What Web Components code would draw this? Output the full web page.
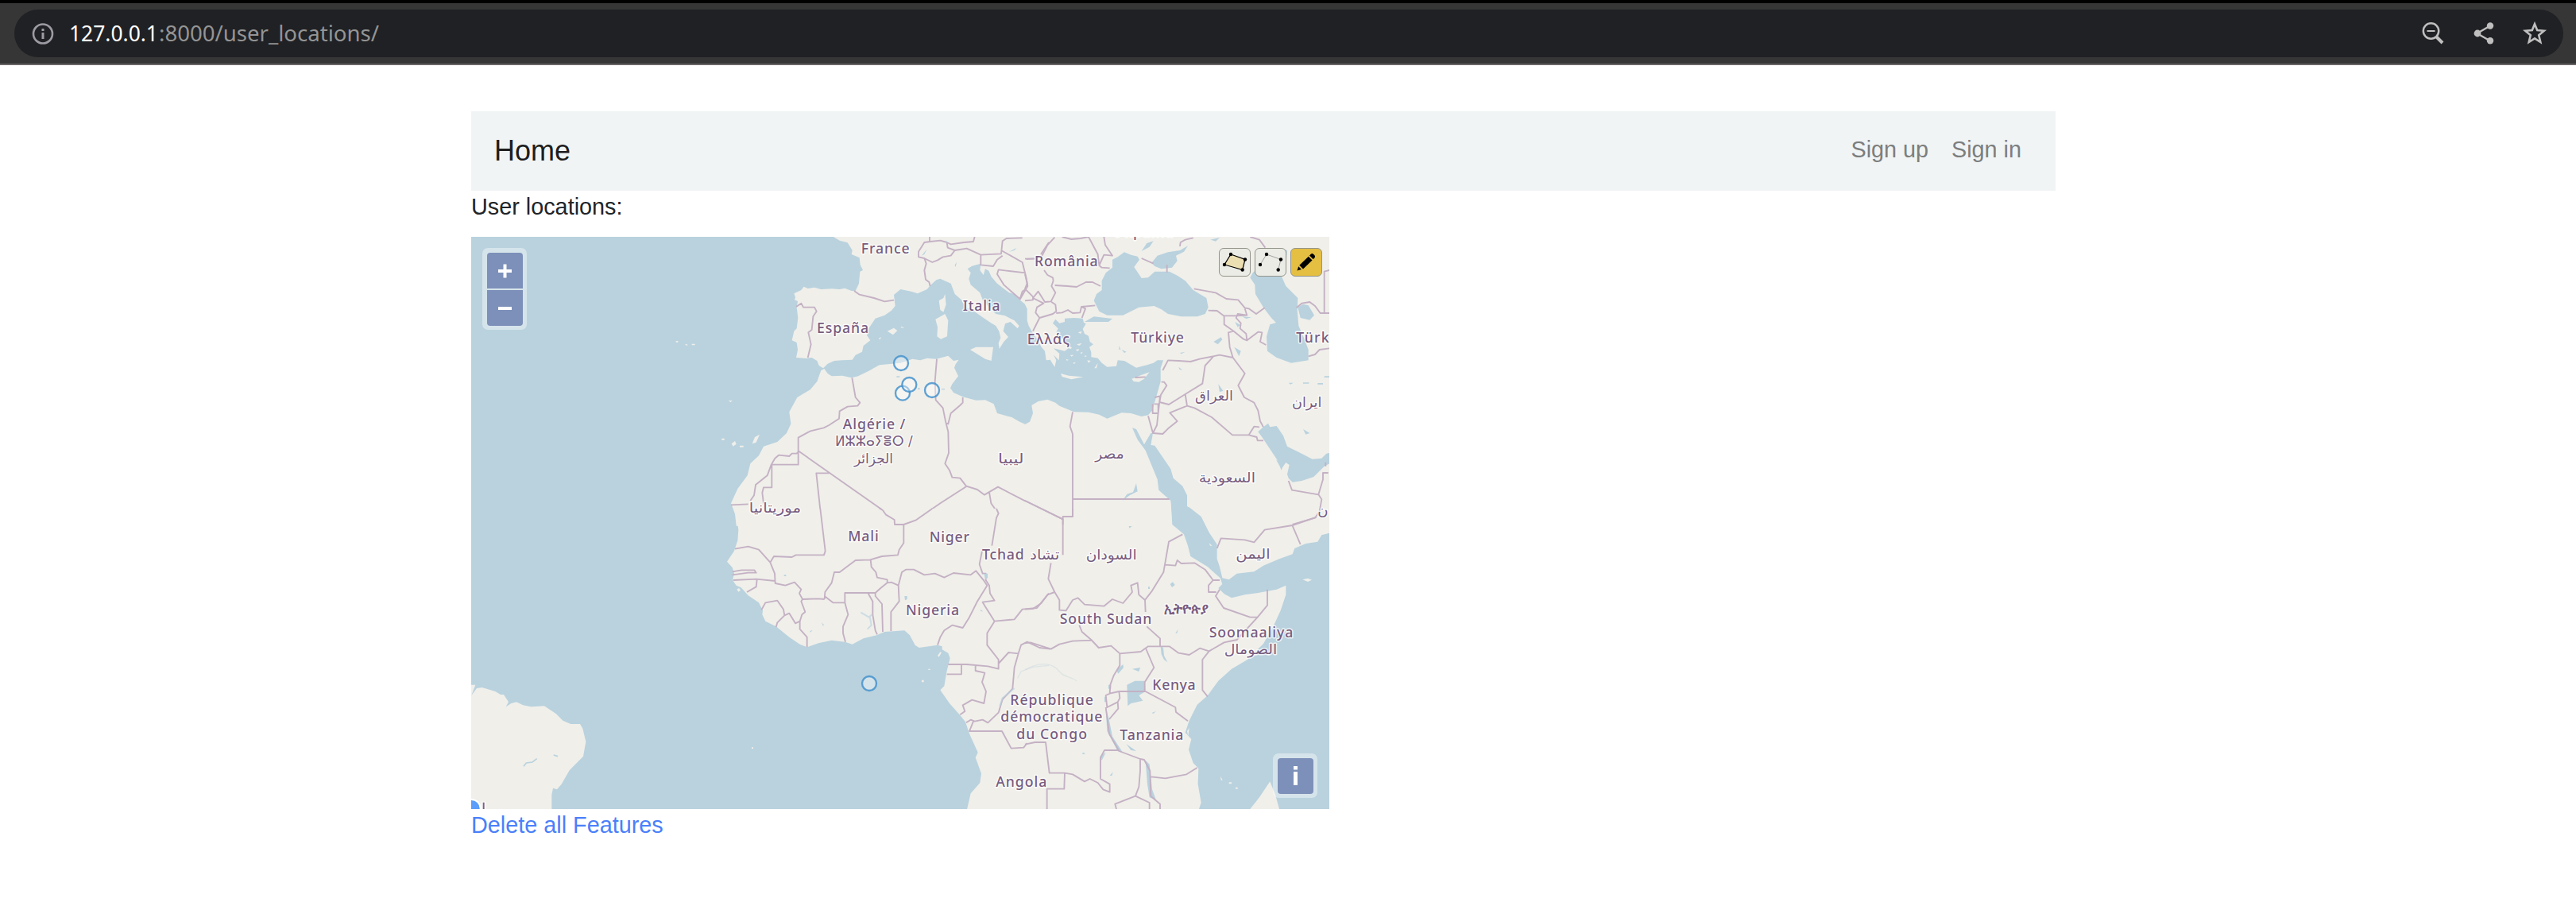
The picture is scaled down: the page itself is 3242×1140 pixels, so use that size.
<!DOCTYPE html>
<html lang="en">
<head>
<meta charset="utf-8">
<title>User locations</title>
<style>
body{margin:0;background:#fff;font-family:"Liberation Sans",Arial,sans-serif;color:#212529;font-size:28.8px;line-height:43.2px}
</style>
</head>
<body>
<locations-app></locations-app>
<script>
const define = (name, html) => {
  const t = document.createElement('template');
  t.innerHTML = html;
  customElements.define(name, class extends HTMLElement {
    constructor() {
      super();
      this.attachShadow({ mode: 'open' }).append(t.content.cloneNode(true));
    }
  });
};

define('address-bar', `
<style>
:host{display:block;box-sizing:border-box;height:82px;background:#363636;border-top:4px solid #000;border-bottom:2px solid #696566;padding:8px 16px 8px 18px}
.pill{height:60px;border-radius:30px;background:#202124;display:flex;align-items:center;justify-content:space-between;padding:0 20px 0 19px}
.left{display:flex;align-items:center;height:60px}
.actions{display:flex;gap:32px;margin-right:0}
svg{display:block}
text{font-family:"Noto Sans",sans-serif;font-size:27px}
</style>
<div class="pill">
  <div class="left">
    <svg width="36" height="36" viewBox="0 0 36 36"><circle cx="17" cy="18.5" r="12" fill="none" stroke="#9d9ba3" stroke-width="2.6"/><path d="M15.5 12h3v3h-3zM15.5 17h3v8h-3z" fill="#9d9ba3"/></svg>
    <svg width="420" height="60" viewBox="0 0 420 60" style="margin-left:14px"><text x="0" y="40" fill="#fff" textLength="112" lengthAdjust="spacingAndGlyphs">127.0.0.1</text><text x="113" y="40" fill="#949494" textLength="277" lengthAdjust="spacingAndGlyphs">:8000/user_locations/</text></svg>
  </div>
  <div class="actions">
    <svg width="32" height="32" viewBox="0 0 32 32" fill="none" stroke="#bfbfbf"><circle cx="13.5" cy="13" r="9.7" stroke-width="2.5"/><path d="M8.5 13h10" stroke-width="2"/><path d="M20 20l8 8" stroke-width="4"/></svg>
    <svg width="32" height="32" viewBox="0 0 32 32" fill="#bfbfbf"><path d="M24 6.5L7.500 16L24 25.500" fill="none" stroke="#bfbfbf" stroke-width="2.4"/><circle cx="24" cy="6.500" r="4.200"/><circle cx="8" cy="16" r="4.400"/><circle cx="24" cy="25.300" r="4.200"/></svg>
    <svg width="32" height="32" viewBox="0 0 32 32"><path d="M16 4.200L19.200 12.100L27.800 12.700L21.200 18.300L23.300 27L16 22.400L8.700 27L10.800 18.300L4.200 12.700L12.800 12.100Z" fill="none" stroke="#bfbfbf" stroke-width="2.6"/></svg>
  </div>
</div>`);

define('nav-bar', `
<style>
:host{display:flex;box-sizing:border-box;height:100px;background:#f0f4f5;padding:0 43px 3px 29px;align-items:center;justify-content:space-between}
.brand{font-size:36px;color:rgba(0,0,0,.9);padding-top:2px}
nav{display:flex;gap:28.8px;color:#7c7e7e}
</style>
<div class="brand"><slot name="brand"></slot></div>
<nav><slot></slot></nav>`);

define('ol-panel', `
<style>
:host{display:flex;flex-direction:column;gap:2px;background:rgba(255,255,255,.4);border-radius:7px;padding:6px 5px 5px 6px}
::slotted(svg){display:block;width:45px;height:45px;background:#7c90b9}
::slotted(svg:first-child){border-radius:4px 4px 0 0}
::slotted(svg:last-child){border-radius:0 0 4px 4px}
::slotted(svg:only-child){border-radius:4px}
</style><slot></slot>`);

define('draw-tool', `
<style>
:host{display:block;box-sizing:border-box;width:40px;height:36px;border:1px solid #94948a;border-radius:6px;background:#ebece6;overflow:hidden}
:host([active]){background:#e5bf42}
::slotted(svg){display:block}
</style><slot></slot>`);

define('world-map', `
<style>
:host{display:block;width:1080px;height:720px}
svg{display:block}
.land{fill:#f0efea}
.sea{fill:#b9d2de}
.b{fill:none;stroke:#c4b1c4;stroke-width:5.6;stroke-linejoin:round}
.isl{fill:#f0efea}
text{font-family:"Noto Sans","DejaVu Sans",sans-serif;font-size:53px;font-weight:500;fill:#775c80;stroke:#fff;stroke-opacity:.75;stroke-width:9;stroke-linejoin:round;paint-order:stroke}
.ar{font-family:"DejaVu Sans",sans-serif;font-size:53px}
.pin circle{fill:rgba(255,255,255,.4);stroke:#4592cd;stroke-opacity:.85;stroke-width:7}
</style>
<svg width="1080" height="720" viewBox="-921 24 3240 2160">
<rect class="sea" x="-921" y="24" width="3240" height="2160"/>
<g transform="translate(1170 0)"><path class="land" d="M0 20H1150V1070H0z"/></g>
<g transform="translate(1170 1050)"><path class="land" d="M0 0H1150V1140H0z"/></g>

<!-- western Europe and the Maghreb -->
<g>
<path class="land" d="M440 20L470 38 500 46 518 75 515 90 545 103 548 130 558 150 547 155 543 200 530 228 515 228 490 218 470 222 440 220 400 222 375 215 350 219 335 212 325 225 298 238 303 252 300 262 312 267 308 290 313 330 308 370 298 380 290 415 308 423 312 450 306 480 345 483 365 480 385 492 392 510 408 520 425 503 450 492 480 490 518 488 530 470 555 458 560 435 586 415 573 395 580 370 605 332 640 320 665 303 680 285 675 243 700 222 740 230 765 238 800 222 812 208 835 187 850 182 890 200 905 240 930 262 945 290 975 303 1010 328 1040 348 1060 360 1072 380 1078 405 1070 425 1073 447 1090 420 1107 402 1088 380 1095 352 1115 345 1142 370 1148 360 1130 340 1095 322 1060 315 1035 290 1010 262 1000 235 965 205 958 182 965 160 953 145 970 134 1003 125 1000 150 1013 168 1020 145 1033 152 1043 175 1065 200 1090 220 1110 235 1130 240 1150 262 1172 280V20z"/>
<path class="land" d="M1172 732L1150 722 1120 705 1065 690 1052 655 1020 640 985 641 935 628 900 612 888 595 895 580 918 550 903 518 908 505 920 488 900 492 880 473 855 480 835 485 800 482 775 490 745 485 700 500 620 508 580 530 540 550 515 556 480 548 440 550 425 540 412 522 400 528 385 570 360 600 310 630 280 685 286 730 270 765 235 798 183 815 165 850 133 880 122 925 85 975 60 1030 75 1070 80 1115H1172z"/>
<path class="isl" d="M845 265L862 255 868 240 872 280 862 308 850 300zM832 335L868 315 880 340 876 400 852 410 838 400 840 365zM963 450L985 440 1050 440 1043 492 1020 485zM650 380L675 368 688 378 672 394zM700 366L716 370 704 362zM617 408L628 402 622 412zM140 805L150 780 168 770 155 800zM62 805L75 795 80 806 68 815zM93 812h14v6h-14zM25 785h10v6h-10zM50 642L66 642 58 648zM-148 417h8v5h-8zM-115 432l8-4 4 6zM-88 428h12v5h-12z"/>
<path class="b" d="M525 228L545 242 600 255 640 268 675 263M306 288L325 275 333 290 375 290 383 305 370 325 365 375 352 385 362 430 350 480M812 210L808 195 795 185 790 150 797 125 790 105 768 100 768 80 790 45 812 42 850 38 875 45 890 52 940 45 975 42 980 24M810 24V42M875 45L878 65 905 75 890 95 860 100 840 112 820 120 790 105M905 75L950 68 1003 92 1080 88 1085 40 1100 30 1160 28M1003 92V130L1050 135 1065 110 1085 95M1080 75L1160 120 1175 180 1180 210 1150 262M1172 160L1100 152 1070 148 1065 165 1090 205 1150 258M1175 108L1205 106M1230 90L1260 45M1175 220L1160 230 1150 262M517 556L530 630 547 650 538 662 500 665 470 682 468 710 430 735 410 745 360 757 314 782V884H212M314 835L308 842 290 842 280 852 240 848 226 860 212 884 197 925 153 960 147 1000 133 1020M214 884V970H183L178 990 183 1030M125 1033L60 1036M314 832L633 1056 645 1073 677 1092 678 1110H712L757 1094 850 1030 948 967M403 1110L382 916H430M837 485L830 570 833 640 860 670 870 720 880 760 882 840 868 880 885 905 895 932 925 935 948 965 990 978 1017 998 1068 968 1172 1022M870 725L880 730 890 690 925 660 935 650V630M1035 988L1042 1030 1070 1070 1060 1110"/>
<path class="sea" d="M1110 80L1138 66 1130 75zM905 130L912 120 908 138zM780 95L800 70 790 90zM685 550h12v4h-12zM765 595h8v5h-8zM855 597h12v4h-12zM870 38l6 4-6 5z"/>
</g>

<!-- Balkans, Black Sea, Levant, Arabia -->
<g transform="translate(1170 0)">
<path class="sea" d="M0 280L8 295 8 340 14 360 28 385 45 410 62 440 75 455 80 490 95 488 112 515 118 490 108 470 128 490 130 465 108 445 150 455 170 440 140 408 118 385 125 370 105 350 115 335 130 350 150 345 150 332 185 330 218 332 222 348 230 352 218 372 225 390 240 398 245 420 258 430 243 440 250 460 250 478 275 482 290 500 310 515 345 512 350 490 375 492 420 518 460 508 485 500 500 490 522 490 512 520 512 570 495 630 480 680 465 697 440 702 400 690 365 688 310 710 280 695 240 686 185 685 130 662 115 650 85 638 50 645 25 660 30 690 18 722 0 732z"/>
<path class="sea" d="M225 345L260 325 330 333 315 345 280 345zM260 265L270 240 290 225 290 190 305 160 330 140 330 110 350 100 375 82 400 92 425 98 432 110 412 138 440 180 465 178 490 155 545 155 575 170 605 190 635 225 685 255 692 290 680 315 650 325 590 325 540 315 515 298 488 285 430 290 400 305 370 320 310 320 280 305zM478 122L500 95 540 82 585 75 615 58 600 80 570 95 575 115 555 140 515 145 490 135z"/>
<path class="sea" d="M850 178L860 160 925 100 935 90 975 70 990 75 985 130 965 165 985 210 1030 255 1028 300 1033 360 1055 410 1070 450 1070 490 1005 500 950 480 915 455 912 400 925 355 948 348 930 330 900 290 870 240 868 205zM1030 290L1050 278 1070 283 1092 320 1075 338 1040 330z"/>
<path class="sea" d="M880 760L900 742 918 728 925 742 950 738 975 775 990 815 1040 840 1085 863 1120 860 1138 842 1150 840V880L1130 890 1090 930 1045 945 1010 950 995 935 990 920 998 885 985 876 972 895 968 905 962 890 948 865 955 870 915 810 895 780zM405 745L420 750 450 808 475 765 483 765 475 810 490 812 550 900 560 935 595 965 612 1000 612 1040 650 1080 670 1110 560 1112 550 1020 505 980 500 940 455 830 425 790zM368 1020L385 995 408 988 420 955 425 985 395 1000zM712 420L740 403 745 412 728 430zM790 440L815 455 808 475zM730 580L748 605 735 610zM793 345l20 12-10 8zM700 35l35-8-15 14zM440 78l20-30 25-8-15 22zM1050 750l25 15-15 5zM995 575l18 0-10 6zM1050 574h22v4h-22zM1130 550h20v5h-20zM1105 576h20v5h-20zM365 450l18 8-8 4zM355 435l6 14h-6zM580 515l15 12-12-3zM585 462l20-4-15 8zM820 325l35 3-20 5z"/>
<path class="isl" d="M135 540L165 548 220 553 175 562 140 552zM403 560L440 545 470 535 450 560 430 572 410 570zM262 520L275 500 270 520zM195 430L215 425 205 435zM190 450L205 448 200 456zM200 385L215 380 210 390zM235 490L248 492 240 500zM170 470l14 0-8 6zM160 395l12 4-8 5zM150 425l28 18-8 5zM180 500l12-3-6 7zM208 462l10-4-4 8zM155 485l10 3-7 4zM225 472l9 2-8 4z"/>
<path class="b" d="M0 107H35M62 100L85 55 112 26M140 24L175 33 210 30 240 24 275 90 280 130M298 24L303 55 330 95 298 92 280 132 290 140 320 142M72 150L85 168 105 178 107 190M113 207L160 210 195 213 230 195 255 195 285 210M107 190L100 210 115 235 98 268 75 270 50 230 30 255 70 275 45 290 40 310 55 330 105 315 118 305 115 280 100 270M0 165L8 200 0 220 30 250 30 262 0 265M55 330L30 380M118 312L140 310 162 300 180 312 208 310 213 288 265 283M213 288L228 295 215 330M585 60L587 45 605 35 635 28M440 105L485 125M536 130V158M850 24L885 35 907 65M638 220L720 235 760 258 805 262 830 292 845 295 873 315 905 292M692 302L725 303 750 322 800 322 838 320 830 295M752 322V355L788 380 825 410 838 415 835 390 812 370 815 350 797 330 803 315 838 320M788 380L768 385 773 440 785 480 830 540 805 585 828 630 865 650 880 680 888 720 900 742M838 415L880 383 895 385 888 420 910 432M520 528L540 490 580 492 625 495 660 485 710 475 735 470 785 480M712 475L680 510 670 578 605 618 543 657 508 648 513 620 535 585 525 572 515 572M605 618L612 662 547 688 575 720 540 748 520 768 483 765 465 700M490 630L510 625 498 735 483 765M488 655H503V690H482V655M612 662L640 670 705 705 783 772H845L865 740 885 742M845 772L875 780 878 793H900M995 945L1008 980 1108 997 1120 1015 1112 1060 1095 1085 1010 1110M1108 997L1125 940V915H1145M1025 292L1045 275 1075 270 1095 285 1115 312H1150M1130 312V155L1150 150M1070 475L1095 468 1112 450 1150 445M180 685L170 740 180 768V1080H143V1110M180 1014H545M0 1020L143 1090M415 555L455 553M1135 875V890"/>
</g>

<!-- west and central Africa -->
<g transform="translate(0 1050)">
<path class="land" d="M72 0L75 15 82 40 88 80 85 120 72 160 45 200 65 222 72 245 66 270 80 290 98 298 125 328 165 355 180 385 178 400 190 425 230 445 280 485 320 512 347 523 390 508 440 497 490 503 518 512 560 490 610 478 640 465 715 460 735 478 755 515 770 525 840 515 857 520 857 532 880 545 887 565 875 612 865 670 850 685 885 735 925 780 945 805 960 850 992 920 983 940 1005 1000 1000 1035 965 1075 950 1140H1172V0z"/>
<path class="isl" d="M840 555l10-14 5 2-10 17zM780 647h8v8h-8zM805 605h7v4h-7zM138 901h6v5h-6zM82 305l8-5 6 8-8 6z"/>
<path class="b" d="M620 -2L633 6 645 23 677 42 678 60H712L757 44 820 0M75 152L125 143 165 155 208 203 222 180 290 183 305 175H411L416 160 397 0M208 203L225 245 227 282 265 290 300 278 325 305 318 320 330 342 390 340 413 342M65 238L100 232H148L155 242H125L65 250M68 270L155 266 227 273M158 268L155 295 120 315M175 382L190 355 235 347 258 380 262 403 235 430 230 447M262 403L280 395 303 433 320 425 328 400 340 390 325 350 330 342M320 425V455L347 485V523M413 342L415 315 440 280 450 240 470 240 530 195 585 193 630 180 690 175 695 155 712 130V60M413 330L445 355 490 355M587 193L590 220 607 240 612 260 650 268 650 280 625 300 605 318H490V355L502 400 483 445V470L492 503M578 320L595 350V400L605 460 612 475M605 318V330L630 360 633 465M664 462V390L695 350 692 290 665 278 650 280M692 290L705 240 720 230 750 230 790 250 830 245 865 260 900 243 965 250 985 235 1015 272 1027 290 990 350 960 410 935 450 895 440 865 460 850 485 840 515M1062 0L1070 18 1062 35 1045 140M1010 150L998 210 1010 245H1022V270L1035 290 1038 320 1055 347 1010 353 1020 370 1055 425 1027 470V515L1070 570V605L1030 595 950 588H880M930 590V625H875M983 592V612L1018 620 1008 655 1023 690 1015 735 970 722 935 742 943 765 925 778M1070 585L1108 543 1145 547M1055 425L1130 418 1160 380 1215 375 1260 320M1145 547L1130 600 1123 680 1085 720 1070 770 1030 808 1010 797 980 803 965 797 948 808M975 803L960 840H1083L1118 905 1165 902 1178 885M1145 547L1155 515 1178 503 1225 525 1265 530"/>
<path fill="none" stroke="#b9d2de" stroke-width="6" d="M1130 678L1085 715 1075 745M550 392L585 412 590 440 575 455M580 410L592 400" stroke-opacity=".65"/>
<path fill="none" stroke="#b9d2de" stroke-width="4" d="M1142 640L1155 615 1200 598 1260 592" stroke-opacity=".35"/>
<path class="sea" d="M1015 245h14v16l-8 6zM715 330h10v12l-8 4zM402 430l10 10-5 2zM1000 380l12 8h-8zM358 462l10-3-8 8zM260 250h8v5h-8z"/>
</g>

<!-- east Africa and the Indian Ocean -->
<g transform="translate(1170 1050)">
<path class="sea" d="M552 -10L556 60 600 97 615 140 625 180 690 220 737 262 745 285 730 300 752 322 780 337 830 325 880 318 950 305 985 290 985 325 965 385 935 450 900 510 840 570 780 605 730 650 690 705 650 740 620 800 605 845 628 870 618 910 635 960 655 980 653 1040 665 1110 655 1140H845L885 1090 925 1030 945 1080 962 1140H1150V92L1120 100 1105 125 1060 132 1018 150 1010 172 960 190 900 215 865 238 800 245 770 268 745 262 735 220 725 190 725 135 695 90 665 30 620 -5z"/>
<path class="isl" d="M1048 268l20-5 15 6-15 7zM738 1010l8 15h-6zM770 1033h10v6h-10zM795 1052h8v6h-8zM612 840l8-12-4 30zM695 130l12 10h-8z"/>
<path class="sea" d="M385 665L415 650 450 650 455 690 430 705 445 725 400 735 388 745zM512 520L522 525 525 555 538 580 525 570 515 550zM345 610L370 588 372 600 352 623zM305 750L318 800 330 860 370 922 350 915 310 840zM382 888L420 915 400 912zM455 950L470 965 475 1010 480 1060 495 1100 470 1090 462 1040zM283 935L305 920 290 950zM548 285L558 277 566 288 555 297zM405 605L435 600 430 615zM315 665h10v15h-10zM300 710h8v20h-8zM392 66l12 0-10 8zM568 470l10-15-4 15zM480 770l15-5-12 10zM320 1008l12-14-4 14zM465 295h6v8h-6zM217 922h8v5h-8z"/>
<path class="b" d="M0 380L30 378 60 358 85 325 112 315 130 345V383L155 385 180 345 200 337 225 362 298 368 330 342 370 357 405 315 400 290 425 280 430 325 453 345 455 390M98 205L88 265 100 290 112 315M0 -30L143 40V175M143 30H180V0M453 345L480 310 523 240 530 200 543 125 595 97M530 212L568 215 575 195 590 207 640 205 680 230 710 270H735M710 270L693 290V315H722M735 305L720 330 750 375 850 410H878L915 365V305M878 410L800 495 752 505 695 538 660 527 620 552 580 545 545 520H465L437 540 358 547 325 518 278 525 250 495 215 465 205 440M250 497L180 500 130 512 98 530 20 505 0 508M510 520V490L460 445M695 538L670 570V685L690 710M455 525L487 600 452 655V690H355L320 698 322 665 335 630 358 592V547M355 690L358 715 350 730 310 750 305 705 320 698M350 730L352 755 318 795M455 690L568 750 570 768 615 802M305 750L318 850 355 915 435 945 450 948 472 990 475 1085 510 1115V1134M355 912H300L285 940V1020L320 1040V1070L295 1060 275 1035 245 1020 225 1030 180 1003 150 998 92 998 78 882H38L0 890M150 998L148 1058H83V1134M475 1012L530 1018 610 1003 650 978M435 945V990L430 1050 417 1085 340 1115 345 1134M417 1085L470 1110 470 1134M725 150L740 112 830 118 865 127 905 80 1010 63 1100 32M1010 65L1040 135"/>
<path fill="none" stroke="#b9d2de" stroke-width="4" stroke-opacity=".35" d="M0 608C70 570 110 590 130 615S170 630 195 650"/>
</g>

<!-- Brazil -->
<g transform="translate(-930 1530)">
<path class="land" d="M0 185L25 185 10 225 30 198 50 195 100 210 120 222 132 222 150 250 140 268 160 255 180 250 205 262 235 268 285 265 330 295 355 320 385 333 420 333 430 350 442 400 432 455 380 508 350 560 333 580 318 575 313 600V660H0z"/>
<path fill="none" stroke="#b9d2de" stroke-width="5" d="M207 493L217 480 240 477 257 464M320 450L336 455"/>
<circle cx="10" cy="652" r="37" fill="#fff"/><circle cx="10" cy="652" r="31" fill="#5a9dfa"/>
<path d="M56 626V656" stroke="#fff" stroke-width="14"/><path d="M56 629V656" stroke="#7b6183" stroke-width="6"/>
</g>

<g>
<text x="551" y="88" textLength="183">France</text>
<text x="384" y="386" textLength="195">España</text>
<text x="935" y="304" textLength="141">Italia</text>
<text x="1206" y="134" textLength="239">România</text>
<text x="1178" y="430" textLength="160">Ελλάς</text>
<text x="1510" y="23" textLength="220">Україна</text>
<text x="1570" y="422" textLength="200">Türkiye</text>
<text x="2194" y="422" textLength="124">Türk</text>
<text x="482" y="751" textLength="236">Algérie /</text>
<text class="ar" x="453" y="814" textLength="293" lengthAdjust="spacingAndGlyphs">ⵍⵣⵣⴰⵢⴻⵔ /</text>
<text class="ar" x="525" y="878" textLength="147" lengthAdjust="spacingAndGlyphs">الجزائر</text>
<text class="ar" x="1068" y="878" textLength="98" lengthAdjust="spacingAndGlyphs">ليبيا</text>
<text class="ar" x="128" y="1064" textLength="196" lengthAdjust="spacingAndGlyphs">موريتانيا</text>
<text class="ar" x="1812" y="642" textLength="144" lengthAdjust="spacingAndGlyphs">العراق</text>
<text class="ar" x="2178" y="667" textLength="112" lengthAdjust="spacingAndGlyphs">ايران</text>
<text class="ar" x="1435" y="861" textLength="109" lengthAdjust="spacingAndGlyphs">مصر</text>
<text class="ar" x="1826" y="952" textLength="214" lengthAdjust="spacingAndGlyphs">السعودية</text>
<text class="ar" x="2275" y="1074" textLength="40" lengthAdjust="spacingAndGlyphs">ن</text>
</g>
<g transform="translate(0 1050)">
<text x="502" y="124" textLength="115">Mali</text>
<text x="809" y="125" textLength="151">Niger</text>
<text x="1008" y="193" textLength="158">Tchad</text>
<text class="ar" x="1189" y="193" textLength="111" lengthAdjust="spacingAndGlyphs">تشاد</text>
<text x="720" y="401" textLength="201">Nigeria</text>
<text x="1114" y="740" textLength="314">République</text>
<text x="1078" y="804" textLength="384">démocratique</text>
<text x="1138" y="869" textLength="266">du Congo</text>
<text x="1060" y="1050" textLength="192">Angola</text>
</g>
<g transform="translate(1170 1050)">
<text class="ar" x="230" y="193" textLength="192" lengthAdjust="spacingAndGlyphs">السودان</text>
<text class="ar" x="796" y="190" textLength="130" lengthAdjust="spacingAndGlyphs">اليمن</text>
<text x="131" y="435" textLength="347">South Sudan</text>
<text x="524" y="396" textLength="168" lengthAdjust="spacingAndGlyphs" style="font-weight:700">ኢትዮጵያ</text>
<text x="695" y="486" textLength="317">Soomaaliya</text>
<text class="ar" x="752" y="550" textLength="200" lengthAdjust="spacingAndGlyphs">الصومال</text>
<text x="481" y="684" textLength="163">Kenya</text>
<text x="358" y="874" textLength="240">Tanzania</text>
</g>
<g class="pin"><circle cx="702" cy="501" r="27"/><circle cx="708" cy="614" r="27"/><circle cx="733" cy="582" r="27"/><circle cx="819" cy="603" r="27"/><circle cx="582" cy="1710" r="27"/></g>
</svg>`);

define('map-view', `
<style>
:host{display:block;position:relative;width:1080px;height:720px;overflow:hidden}
.zoom{position:absolute;left:14px;top:14px}
.info{position:absolute;right:15px;bottom:14px}
.tools{position:absolute;right:9px;top:14px;display:flex;gap:5px}
</style>
<world-map></world-map>
<ol-panel class="zoom">
  <svg viewBox="0 0 45 45"><path d="M14 23H31M22.500 14.500V31.500" stroke="#fff" stroke-width="4"/></svg>
  <svg viewBox="0 0 45 45"><path d="M14 23H31" stroke="#fff" stroke-width="4"/></svg>
</ol-panel>
<div class="tools">
  <draw-tool><svg width="38" height="34" viewBox="0 0 38 34"><path d="M14 7L32 13.500L28.700 26.500L6 20Z" fill="#ecdfb2" stroke="#000" stroke-width="1.200"/><circle cx="14" cy="7" r="2.200"/><circle cx="32" cy="13.500" r="2.200"/><circle cx="28.700" cy="26.500" r="2.200"/><circle cx="6" cy="20" r="2.200"/></svg></draw-tool>
  <draw-tool><svg width="38" height="34" viewBox="0 0 38 34"><path d="M6 20L14 7L32 13.500L28.700 26.500" fill="none" stroke="#999" stroke-width=".9"/><circle cx="14" cy="7" r="2.200"/><circle cx="32" cy="13.500" r="2.200"/><circle cx="28.700" cy="26.500" r="2.200"/><circle cx="6" cy="20" r="2.200"/></svg></draw-tool>
  <draw-tool active><svg width="38" height="34" viewBox="0 0 38 34"><path d="M7.500 27.500L9.200 22.200L13 26ZM10.300 20.800L21.800 9.700L26.500 14.400L15 25.500ZM23 8.500L25 6.500Q26.500 5.200 28.500 7.200Q31 9.500 29.500 11.300L27.700 13.200Z"/></svg></draw-tool>
</div>
<ol-panel class="info">
  <svg viewBox="0 0 45 45"><path d="M20 10h5v4.500h-5zM20 17h5v17h-5z" fill="#fff"/></svg>
</ol-panel>`);

define('locations-app', `
<style>
:host{display:block}
main{width:1994px;margin:58px 0 0 593px}
p{margin:0;height:58px;line-height:40px}
a{display:block;color:#4a80fa;line-height:40px;text-decoration:none}
</style>
<address-bar></address-bar>
<main>
  <nav-bar><span slot="brand">Home</span><span>Sign up</span><span>Sign in</span></nav-bar>
  <p>User locations:</p>
  <map-view></map-view>
  <a>Delete all Features</a>
</main>`);
</script>
</body>
</html>
